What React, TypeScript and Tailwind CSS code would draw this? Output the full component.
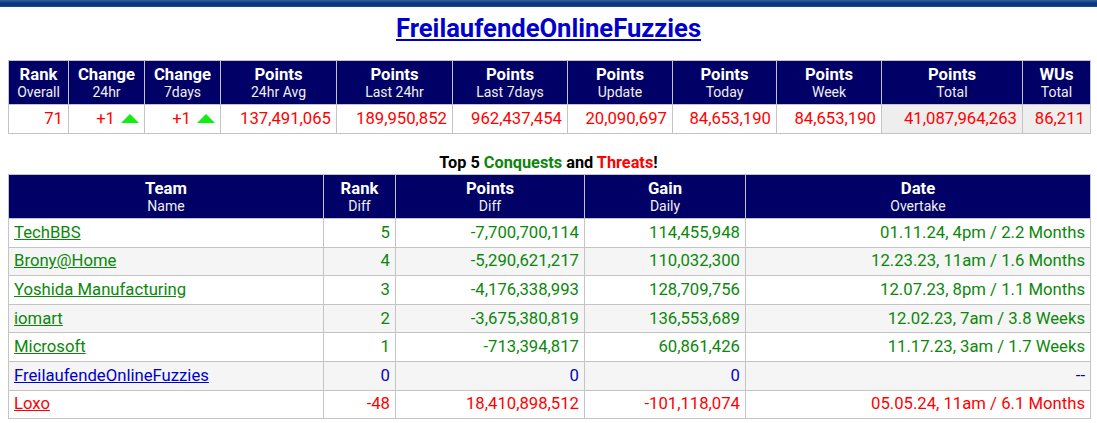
import React from 'react'

const font = { fontFamily: 'Roboto, "Noto Sans", sans-serif' }

const stats = [
  ['Rank', 'Overall', 'w-[60px]'],
  ['Change', '24hr', 'w-[76px]'],
  ['Change', '7days', 'w-[76px]'],
  ['Points', '24hr Avg', 'w-[116px]'],
  ['Points', 'Last 24hr', 'w-[116px]'],
  ['Points', 'Last 7days', 'w-[115px]'],
  ['Points', 'Update', 'w-[105px]'],
  ['Points', 'Today', 'w-[104px]'],
  ['Points', 'Week', 'w-[105px]'],
  ['Points', 'Total', 'w-[141px]'],
  ['WUs', 'Total', 'w-[68px]'],
]

const rivals = [
  { name: 'TechBBS', rank: '5', diff: '-7,700,700,114', gain: '114,455,948', date: '01.11.24, 4pm / 2.2 Months', c: 'g' },
  { name: 'Brony@Home', rank: '4', diff: '-5,290,621,217', gain: '110,032,300', date: '12.23.23, 11am / 1.6 Months', c: 'g' },
  { name: 'Yoshida Manufacturing', rank: '3', diff: '-4,176,338,993', gain: '128,709,756', date: '12.07.23, 8pm / 1.1 Months', c: 'g' },
  { name: 'iomart', rank: '2', diff: '-3,675,380,819', gain: '136,553,689', date: '12.02.23, 7am / 3.8 Weeks', c: 'g' },
  { name: 'Microsoft', rank: '1', diff: '-713,394,817', gain: '60,861,426', date: '11.17.23, 3am / 1.7 Weeks', c: 'g' },
  { name: 'FreilaufendeOnlineFuzzies', rank: '0', diff: '0', gain: '0', date: '--', c: 'b' },
  { name: 'Loxo', rank: '-48', diff: '18,410,898,512', gain: '-101,118,074', date: '05.05.24, 11am / 6.1 Months', c: 'r' },
]

const colorOf: Record<string, string> = {
  g: 'text-[#0b870b]',
  b: 'text-[#0000cc]',
  r: 'text-[#ff0000]',
}

function Up() {
  return (
    <svg width="18" height="9" viewBox="0 0 18 9" className="inline-block ml-[6px] align-[1px]">
      <polygon points="0,9 9,0 18,9" fill="#11ee11" />
    </svg>
  )
}

function Head({ top, sub, w }: { top: string; sub: string; w?: string }) {
  return (
    <th className={`${w ?? ''} border border-[#c4c4c4] bg-[#000066] text-white text-center font-normal p-0 h-[44px]`}>
      <div className="text-[16.7px] font-bold leading-[18px]">{top}</div>
      <div className="text-[14px] leading-[16px] text-[#f0f0f0]">{sub}</div>
    </th>
  )
}

export default function App() {
  const td = 'border border-[#c4c4c4] text-right px-[5px] text-[16.7px] leading-[18px] p-0'
  return (
    <div className="bg-white w-[1097px] h-[423px] overflow-hidden" style={font}>
      <div className="h-[7px] bg-gradient-to-b from-[#3a6399] via-[#0b3680] to-[#0b3680] border-b border-[#1d4c92]" />
      <div className="pt-[7px] pb-[18px] h-[53px] text-center text-[25.6px] leading-[28px]">
        <a href="#" className="font-bold text-[#0000cc] underline">
          FreilaufendeOnlineFuzzies
        </a>
      </div>

      <div className="px-[8px]">
        <table className="w-[1082px] table-fixed border-collapse">
          <thead>
            <tr>
              {stats.map(([t, s, w], i) => (
                <Head key={i} top={t} sub={s} w={w} />
              ))}
            </tr>
          </thead>
          <tbody>
            <tr className="text-[#ff0000] h-[29px]">
              <td className={td}>71</td>
              <td className={td}>+1<Up /></td>
              <td className={td}>+1<Up /></td>
              <td className={td}>137,491,065</td>
              <td className={td}>189,950,852</td>
              <td className={td}>962,437,454</td>
              <td className={td}>20,090,697</td>
              <td className={td}>84,653,190</td>
              <td className={td}>84,653,190</td>
              <td className={`${td} bg-[#eeeeee]`}>41,087,964,263</td>
              <td className={`${td} bg-[#eeeeee]`}>86,211</td>
            </tr>
          </tbody>
        </table>

        <div className="h-[40px] pt-[19px] text-center text-[16.3px] font-bold leading-[20px] text-black">
          Top 5 <span className="text-[#0b870b]">Conquests</span> and{' '}
          <span className="text-[#ff0000]">Threats</span>!
        </div>

        <table className="w-[1082px] table-fixed border-collapse">
          <thead>
            <tr>
              <Head top="Team" sub="Name" w="w-[315px]" />
              <Head top="Rank" sub="Diff" w="w-[72px]" />
              <Head top="Points" sub="Diff" w="w-[189px]" />
              <Head top="Gain" sub="Daily" w="w-[161px]" />
              <Head top="Date" sub="Overtake" w="w-[345px]" />
            </tr>
          </thead>
          <tbody>
            {rivals.map((r, i) => (
              <tr key={r.name} className={`h-[28.6px] ${colorOf[r.c]} ${i % 2 === 1 ? 'bg-[#f5f5f5]' : 'bg-white'}`}>
                <td className={`${td} !text-left`}>
                  <a href="#" className="underline">{r.name}</a>
                </td>
                <td className={td}>{r.rank}</td>
                <td className={td}>{r.diff}</td>
                <td className={td}>{r.gain}</td>
                <td className={td}>{r.date}</td>
              </tr>
            ))}
          </tbody>
        </table>
      </div>
    </div>
  )
}
